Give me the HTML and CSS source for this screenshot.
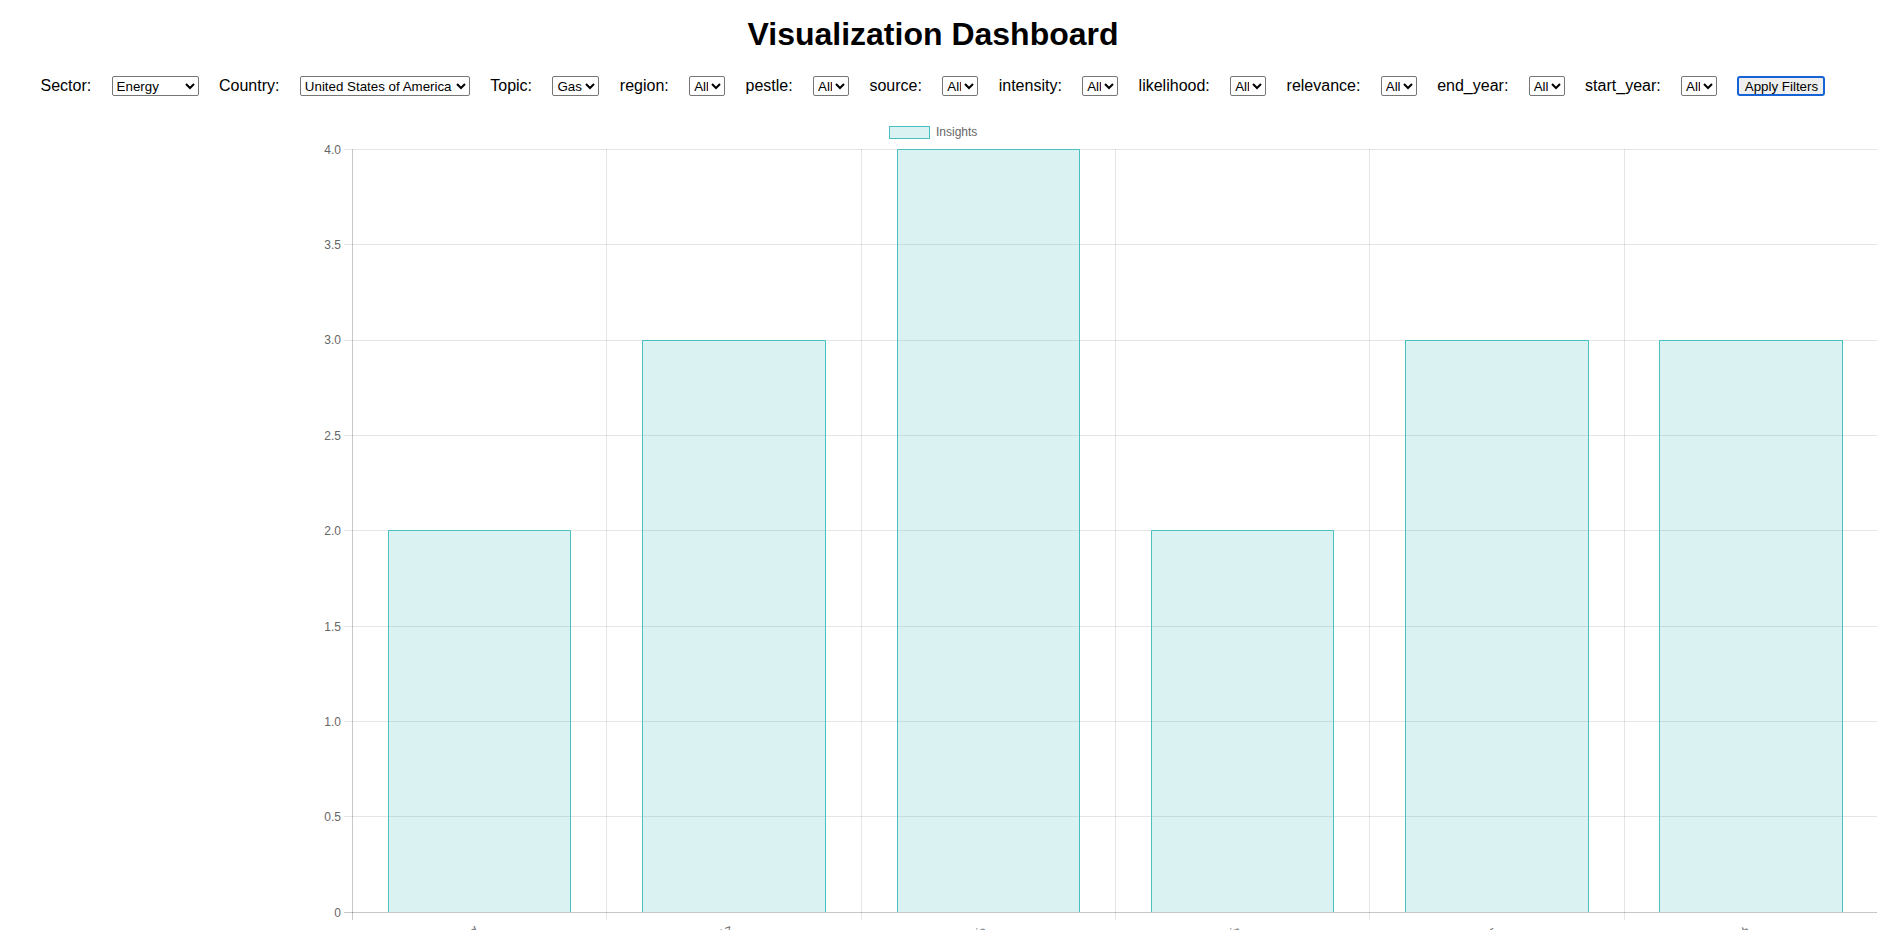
FILE: index.html
```html
<!DOCTYPE html>
<html lang="en">
<head>
<meta charset="utf-8">
<title>Visualization Dashboard</title>
<link rel="stylesheet" href="styles.css">
</head>
<body>
<header class="top">
  <h1 class="title">Visualization Dashboard</h1>
  <div class="filters">
    <label class="flabel" for="sector">Sector:</label>
    <select id="sector" class="fselect w-sector"><option>All</option><option selected>Energy</option></select>
    <label class="flabel" for="country">Country:</label>
    <select id="country" class="fselect w-country"><option>All</option><option selected>United States of America</option></select>
    <label class="flabel" for="topic">Topic:</label>
    <select id="topic" class="fselect w-topic"><option>All</option><option selected>Gas</option></select>
    <label class="flabel" for="region">region:</label>
    <select id="region" class="fselect w-all"><option>All</option></select>
    <label class="flabel" for="pestle">pestle:</label>
    <select id="pestle" class="fselect w-all"><option>All</option></select>
    <label class="flabel" for="source">source:</label>
    <select id="source" class="fselect w-all"><option>All</option></select>
    <label class="flabel" for="intensity">intensity:</label>
    <select id="intensity" class="fselect w-all"><option>All</option></select>
    <label class="flabel" for="likelihood">likelihood:</label>
    <select id="likelihood" class="fselect w-all"><option>All</option></select>
    <label class="flabel" for="relevance">relevance:</label>
    <select id="relevance" class="fselect w-all"><option>All</option></select>
    <label class="flabel" for="end_year">end_year:</label>
    <select id="end_year" class="fselect w-all"><option>All</option></select>
    <label class="flabel" for="start_year">start_year:</label>
    <select id="start_year" class="fselect w-all"><option>All</option></select>
    <button class="apply" type="button">Apply Filters</button>
  </div>
</header>

<svg class="chart" width="1877" height="824" viewBox="0 106 1877 824" xmlns="http://www.w3.org/2000/svg">
  <!-- legend -->
  <rect class="bar" x="889.5" y="126.5" width="40" height="12"/>
  <text class="legend-text" x="936" y="136">Insights</text>

  <!-- horizontal grid lines -->
  <g class="grid">
    <line x1="344" y1="149.5" x2="1877" y2="149.5"/>
    <line x1="344" y1="244.5" x2="1877" y2="244.5"/>
    <line x1="344" y1="340.5" x2="1877" y2="340.5"/>
    <line x1="344" y1="435.5" x2="1877" y2="435.5"/>
    <line x1="344" y1="530.5" x2="1877" y2="530.5"/>
    <line x1="344" y1="626.5" x2="1877" y2="626.5"/>
    <line x1="344" y1="721.5" x2="1877" y2="721.5"/>
    <line x1="344" y1="816.5" x2="1877" y2="816.5"/>
  </g>
  <!-- vertical grid lines -->
  <g class="grid">
    <line x1="606.5" y1="149" x2="606.5" y2="920"/>
    <line x1="861.5" y1="149" x2="861.5" y2="920"/>
    <line x1="1115.5" y1="149" x2="1115.5" y2="920"/>
    <line x1="1369.5" y1="149" x2="1369.5" y2="920"/>
    <line x1="1624.5" y1="149" x2="1624.5" y2="920"/>
  </g>
  <g class="axis">
    <line x1="352.5" y1="149" x2="352.5" y2="920"/>
    <line x1="344" y1="912.5" x2="1877" y2="912.5"/>
  </g>

  <!-- y tick labels -->
  <g class="tick">
    <text x="341" y="153.6">4.0</text>
    <text x="341" y="249">3.5</text>
    <text x="341" y="344.4">3.0</text>
    <text x="341" y="439.7">2.5</text>
    <text x="341" y="535.1">2.0</text>
    <text x="341" y="630.5">1.5</text>
    <text x="341" y="725.9">1.0</text>
    <text x="341" y="821.2">0.5</text>
    <text x="341" y="916.6">0</text>
  </g>

  <!-- bars -->
  <g>
    <rect class="bar-fill" x="388" y="530.5" width="183" height="381.5"/>
    <path class="bar-edge" d="M388.5 912V530.5H570.5V912"/>
    <rect class="bar-fill" x="642" y="340.5" width="184" height="571.5"/>
    <path class="bar-edge" d="M642.5 912V340.5H825.5V912"/>
    <rect class="bar-fill" x="897" y="149.5" width="183" height="762.5"/>
    <path class="bar-edge" d="M897.5 912V149.5H1079.5V912"/>
    <rect class="bar-fill" x="1151" y="530.5" width="183" height="381.5"/>
    <path class="bar-edge" d="M1151.5 912V530.5H1333.5V912"/>
    <rect class="bar-fill" x="1405" y="340.5" width="184" height="571.5"/>
    <path class="bar-edge" d="M1405.5 912V340.5H1588.5V912"/>
    <rect class="bar-fill" x="1659" y="340.5" width="184" height="571.5"/>
    <path class="bar-edge" d="M1659.5 912V340.5H1842.5V912"/>
  </g>

  <!-- x tick labels (rotated, mostly below the fold) -->
  <g class="tick xlabels">
    <text transform="translate(478 934) rotate(-18)">Natural gas demand will be sustained by cold weather and industrial load</text>
    <text transform="translate(733 934) rotate(-18)">U.S. LNG exports set to rise as new liquefaction capacity comes online in 2017</text>
    <text transform="translate(987 934) rotate(-18)">Shale gas output keeps rising across Appalachia</text>
    <text transform="translate(1241 934) rotate(-18)">Henry Hub prices expected to average higher in</text>
    <text transform="translate(1495 934) rotate(-18)">Gas-fired generation to overtake coal in the power sector this year</text>
    <text transform="translate(1750 934) rotate(-18)">Pipeline exports to Mexico hit a record high</text>
  </g>
</svg>
</body>
</html>
```

FILE: styles.css
```css
html, body {
  margin: 0;
  padding: 0;
  background: #ffffff;
}

body {
  font-family: "Liberation Sans", Arial, Helvetica, sans-serif;
  color: #000000;
  overflow: hidden;
}

.top {
  padding-right: 11px;
}

.title {
  margin: 16px 0 0;
  font-size: 32px;
  line-height: 37px;
  font-weight: bold;
  text-align: center;
}

.filters {
  margin-top: 23px;
  height: 20px;
  display: flex;
  align-items: center;
  justify-content: center;
  gap: 20.4px;
}

.flabel {
  font-size: 16px;
  line-height: 18px;
  white-space: nowrap;
}

.fselect {
  height: 20px;
  margin: 0;
  font-family: "Liberation Sans", Arial, sans-serif;
  font-size: 13.333px;
  color: #000000;
  background-color: #ffffff;
  border: 1px solid #767676;
  border-radius: 2px;
  box-sizing: border-box;
}

.w-sector { width: 87px; }
.w-country { width: 170px; }
.w-topic { width: 47px; }
.w-all { width: 36px; }

.apply {
  width: 88px;
  height: 20px;
  margin: 0;
  padding: 0;
  box-sizing: border-box;
  font-family: "Liberation Sans", Arial, sans-serif;
  font-size: 13.333px;
  color: #000000;
  background: #efefef;
  border: 2px solid #1663d6;
  border-radius: 3px;
}

.chart {
  display: block;
  margin-top: 10px;
}

.grid line {
  stroke: rgba(0, 0, 0, 0.1);
  stroke-width: 1;
}

.axis line {
  stroke: rgba(0, 0, 0, 0.22);
  stroke-width: 1;
}

.tick text {
  font-family: "Liberation Sans", Arial, Helvetica, sans-serif;
  font-size: 12px;
  fill: #666666;
  text-anchor: end;
}

.legend-text {
  font-family: "Liberation Sans", Arial, Helvetica, sans-serif;
  font-size: 12px;
  fill: #666666;
}

.bar {
  fill: rgba(75, 192, 192, 0.2);
  stroke: rgb(75, 192, 192);
  stroke-width: 1;
}

.bar-fill {
  fill: rgba(75, 192, 192, 0.2);
}

.bar-edge {
  fill: none;
  stroke: rgb(75, 192, 192);
  stroke-width: 1;
}
```
